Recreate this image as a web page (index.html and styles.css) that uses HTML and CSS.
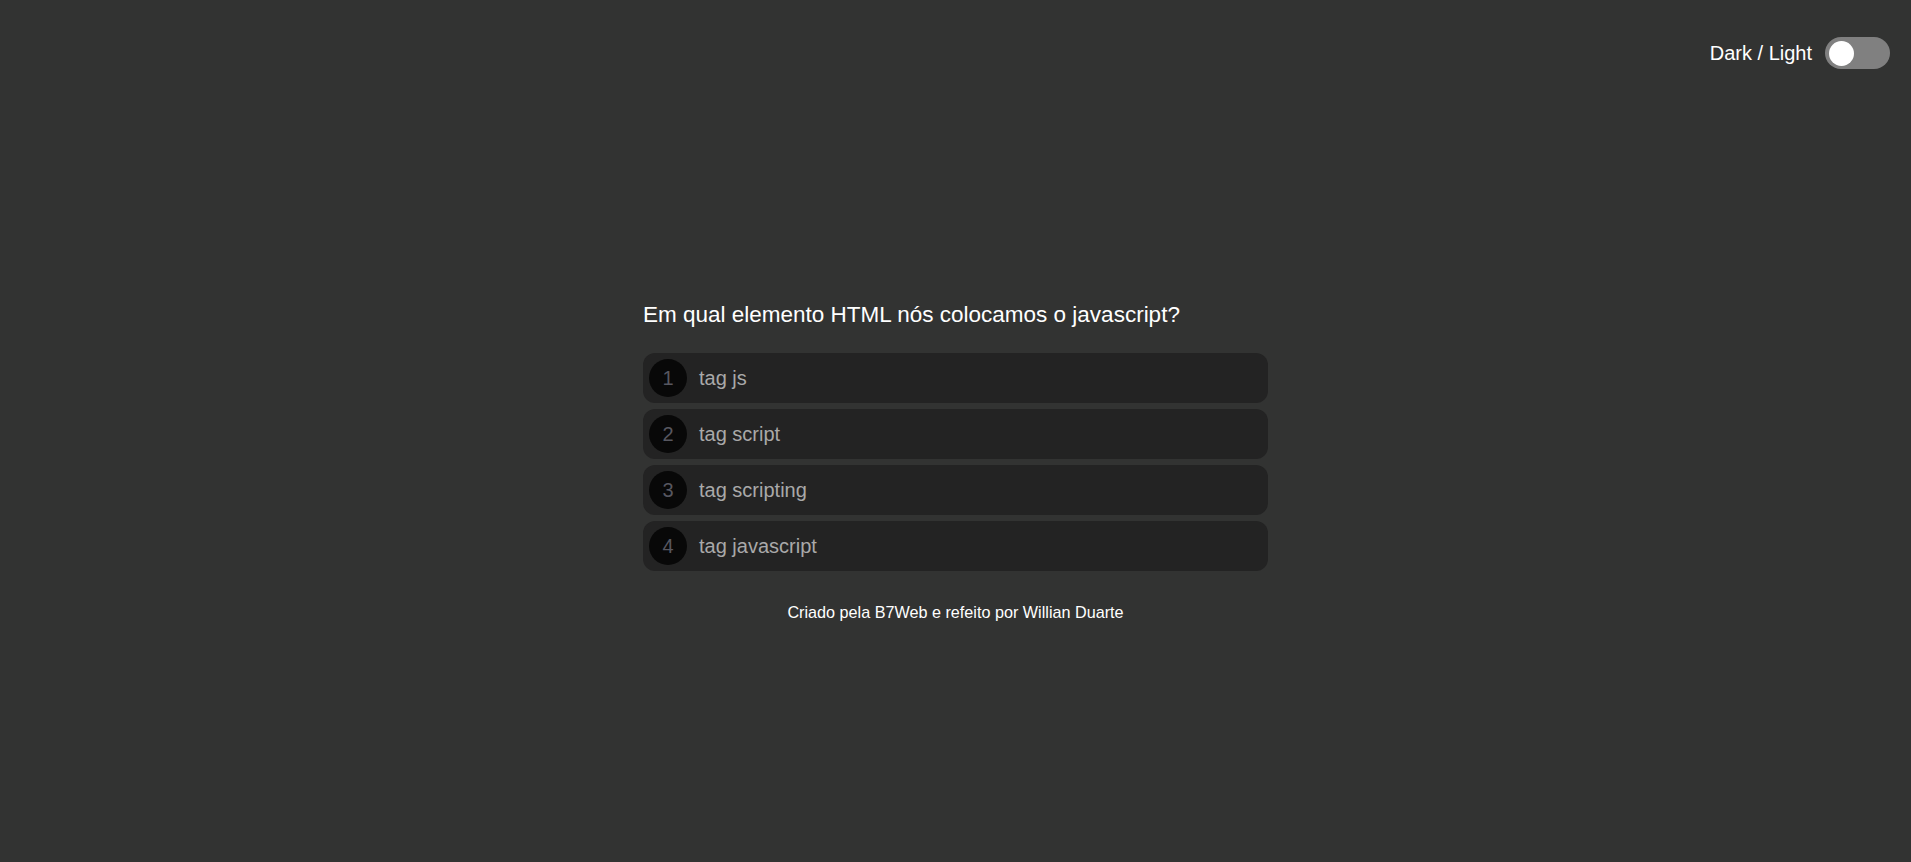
FILE: index.html
```html
<!DOCTYPE html>
<html lang="pt-BR">
<head>
<meta charset="UTF-8">
<title>Quiz</title>
<link rel="stylesheet" href="styles.css">
</head>
<body>
  <header class="topbar">
    <span class="theme-label">Dark / Light</span>
    <div class="switch"><div class="knob"></div></div>
  </header>
  <main class="quiz">
    <h1 class="question">Em qual elemento HTML nós colocamos o javascript?</h1>
    <div class="options">
      <div class="option"><span class="num">1</span><span class="label">tag js</span></div>
      <div class="option"><span class="num">2</span><span class="label">tag script</span></div>
      <div class="option"><span class="num">3</span><span class="label">tag scripting</span></div>
      <div class="option"><span class="num">4</span><span class="label">tag javascript</span></div>
    </div>
    <p class="credits">Criado pela B7Web e refeito por Willian Duarte</p>
  </main>
</body>
</html>
```
FILE: styles.css
```css
html, body {
  margin: 0;
  padding: 0;
}
body {
  background: #323332;
  font-family: "Liberation Sans", Arial, sans-serif;
  color: #ffffff;
  min-height: 862px;
}
.topbar {
  display: flex;
  justify-content: flex-end;
  align-items: center;
  gap: 13px;
  padding: 37px 21px 0 0;
}
.theme-label {
  font-size: 20px;
  color: #ffffff;
}
.switch {
  width: 65px;
  height: 32px;
  border-radius: 16px;
  background: #808080;
  display: flex;
  align-items: center;
  padding-left: 4px;
  box-sizing: border-box;
}
.knob {
  width: 25px;
  height: 25px;
  border-radius: 50%;
  background: #ffffff;
}
.quiz {
  width: 625px;
  margin: 0 auto;
  padding-top: 233px;
}
.question {
  margin: 0 0 25px 0;
  font-size: 22.5px;
  font-weight: normal;
  line-height: 26px;
  color: #ffffff;
}
.options {
  display: flex;
  flex-direction: column;
  gap: 6px;
}
.option {
  display: flex;
  align-items: center;
  height: 50px;
  background: #232323;
  border-radius: 12px;
  padding-left: 6px;
  box-sizing: border-box;
}
.num {
  width: 38px;
  height: 38px;
  border-radius: 50%;
  background: #080808;
  color: #575760;
  font-size: 20px;
  display: flex;
  align-items: center;
  justify-content: center;
  margin-right: 12px;
}
.label {
  font-size: 20px;
  color: #a9a9a9;
}
.credits {
  margin: 32px 0 0 0;
  text-align: center;
  font-size: 16.2px;
  line-height: 18px;
  color: #ffffff;
}
```
